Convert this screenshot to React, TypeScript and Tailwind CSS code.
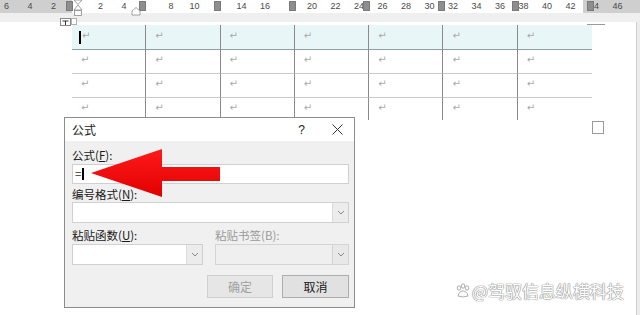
import React from "react";

const rulerVals = [-6, -4, -2, 2, 4, 8, 10, 14, 16, 20, 22, 24, 26, 28, 30, 32, 34, 36, 38, 40, 42, 44, 46];
const markers = [66, 139, 214, 289, 363, 438, 512, 587];

function Ruler() {
  return (
    <div className="relative h-[13px] flex">
      <div className="w-[72px] bg-[#cfcfcf]" />
      <div className="w-[511px] bg-white" />
      <div className="flex-1 bg-[#cfcfcf]" />
      {rulerVals.map((v) => (
        <span
          key={v}
          className="absolute top-[1px] text-[9px] leading-[11px] text-[#4a4a4a] -translate-x-1/2"
          style={{ left: 77 + v * 11.75, fontFamily: '"Liberation Sans", Arial, sans-serif' }}
        >
          {Math.abs(v)}
        </span>
      ))}
      {markers.map((m) => (
        <div
          key={m}
          className="absolute top-[1px] w-[7px] h-[10px] bg-[#8e8e8e] border border-[#7a7a7a]"
          style={{ left: m }}
        />
      ))}
      <svg className="absolute left-[73px] top-0 overflow-visible" width="10" height="18" viewBox="0 0 10 18">
        <path d="M1 0 L9 0 L5 4.5 Z" fill="#fff" stroke="#8a8a8a" strokeWidth="0.8" />
        <path d="M5 5 L9 10 L1 10 Z" fill="#fff" stroke="#8a8a8a" strokeWidth="0.8" />
        <rect x="1.5" y="10.5" width="7" height="5" fill="#fff" stroke="#8a8a8a" strokeWidth="0.8" />
      </svg>
      <svg className="absolute left-[131px] top-[7px] overflow-visible" width="10" height="9" viewBox="0 0 10 9">
        <path d="M1 8 L1 4 L5 0.5 L9 4 L9 8 Z" fill="#fff" stroke="#8a8a8a" strokeWidth="0.8" />
      </svg>
    </div>
  );
}

function Cell({ header, first, last, bottom }: { header?: boolean; first?: boolean; last?: boolean; bottom?: boolean }) {
  return (
    <div
      className={
        "relative flex items-center pl-[9px] " +
        (header
          ? "h-[25px] bg-[#e9f6f8] border-b border-b-[#8f9fa1] "
          : bottom
          ? "h-[22px] "
          : "h-[24px] border-b border-b-[#c9c9c9] ") +
        (last ? "" : "border-r border-r-[#8a8a8a]")
      }
    >
      {first && <span className="w-[2px] h-[13px] bg-black mr-[1px] -ml-[2px]" />}
      <span
        className="text-[10px] leading-none text-[#a8a8a8] -mt-[3px]"
        style={{ fontFamily: '"DejaVu Sans", sans-serif' }}
      >
        ↵
      </span>
    </div>
  );
}

function Chevron({ light }: { light?: boolean }) {
  return (
    <div
      className={
        "w-[16px] h-full flex items-center justify-center border-l " +
        (light ? "bg-[#e8e8e8] border-[#d4d4d4]" : "bg-[#ececec] border-[#dcdcdc]")
      }
    >
      <svg width="8" height="5" viewBox="0 0 8 5">
        <path d="M1 1 L4 4 L7 1" fill="none" stroke="#8a8a8a" strokeWidth="1" />
      </svg>
    </div>
  );
}

export default function App() {
  const cjk = '"Noto Sans CJK SC", "Noto Sans", sans-serif';
  return (
    <div className="relative w-[640px] h-[315px] overflow-hidden bg-[#ececec]" style={{ fontFamily: cjk }}>
      <Ruler />
      <div className="h-[9px] bg-[#efefef]" />
      <div className="relative h-[293px] w-[637px] bg-white border-r border-[#cfcfcf]">
        {/* table move handle */}
        <div className="absolute left-[60px] -top-[4px] w-[11px] h-[8px] bg-white border border-[#8a8a8a] flex items-center justify-center">
          <svg width="7" height="5" viewBox="0 0 7 5">
            <path d="M0.5 1 H6.5 M3.5 1 V5" stroke="#333" strokeWidth="1" />
          </svg>
        </div>
        <div className="absolute left-[71px] -top-[4px] w-[6px] h-[7px] border border-[#b0b0b0] bg-white" />
        {/* top-right corner mark */}
        <div className="absolute left-[587px] top-[2px] w-[18px] h-[3px] border-t border-l border-[#9a9a9a]" />
        {/* end mark square */}
        <div className="absolute left-[592px] top-[99px] w-[12px] h-[13px] border border-[#9a9a9a]" />

        <div className="ml-[72px] pt-[3px] w-[520px] grid grid-cols-7">
          {Array.from({ length: 28 }).map((_, i) => (
            <Cell key={i} header={i < 7} first={i === 0} last={i % 7 === 6} bottom={i >= 21} />
          ))}
        </div>

        {/* watermark */}
        <div
          className="absolute left-[455px] top-[259px] flex items-center gap-[1px] whitespace-nowrap text-[17px] leading-[20px] text-white"
          style={{ textShadow: "0 0 1px #888, 0 0 1px #888, 0 0 1px #888" }}
        >
          <svg width="16" height="16" viewBox="0 0 16 16" className="shrink-0">
            <g fill="#fff" stroke="#999" strokeWidth="0.8">
              <ellipse cx="4" cy="5" rx="1.8" ry="2.2" />
              <ellipse cx="8" cy="3" rx="1.8" ry="2.2" />
              <ellipse cx="12" cy="5" rx="1.8" ry="2.2" />
              <path d="M3 13 Q4 8 8 8 Q12 8 13 13 Q8 15 3 13 Z" />
            </g>
          </svg>
          <span className="whitespace-nowrap">@驾驭信息纵横科技</span>
        </div>
      </div>

      {/* dialog */}
      <div className="absolute left-[64px] top-[117px] w-[291px] h-[191px] border border-[#8c8c8c] bg-[#f0f0f0] flex flex-col">
        <div className="h-[23px] bg-white flex items-center pl-[7px] pr-[11px] text-[12px] text-[#1a1a1a]">
          <span>公式</span>
          <span className="ml-auto mr-[27px] text-[12px]" style={{ fontFamily: '"Liberation Sans", sans-serif' }}>?</span>
          <svg width="11" height="11" viewBox="0 0 11 11">
            <path d="M0.5 0.5 L10.5 10.5 M10.5 0.5 L0.5 10.5" stroke="#333" strokeWidth="1" />
          </svg>
        </div>
        <div className="flex-1 pl-[7px] pr-[5px] text-[11.5px] text-[#1a1a1a]">
          <div className="h-[23px] flex items-end pb-[2px] leading-[14px]">
            公式(<span className="underline">F</span>):
          </div>
          <div className="h-[20px] bg-white border border-[#d0d0d0] flex items-center pl-[2px]">
            <span className="leading-none text-[#333]">=</span>
            <span className="w-[1.5px] h-[12px] bg-black ml-[1px]" />
          </div>
          <div className="h-[18px] flex items-end pb-[1px] leading-[14px]">
            编号格式(<span className="underline">N</span>):
          </div>
          <div className="h-[21px] bg-white border border-[#d0d0d0] flex justify-end">
            <Chevron />
          </div>
          <div className="h-[20px] flex items-end leading-[14px] pb-[1px]">
            <div className="w-[143px]">
              粘贴函数(<span className="underline">U</span>):
            </div>
            <div className="text-[#9a9a9a]">粘贴书签(B):</div>
          </div>
          <div className="flex mt-[1px]">
            <div className="w-[131px] h-[21px] bg-white border border-[#d0d0d0] flex justify-end">
              <Chevron />
            </div>
            <div className="ml-[12px] w-[134px] h-[21px] bg-[#efefef] border border-[#d4d4d4] flex justify-end">
              <Chevron light />
            </div>
          </div>
          <div className="flex justify-end gap-[9px] mt-[10px]">
            <div className="w-[66px] h-[23px] bg-[#e6e6e6] border border-[#cfcfcf] flex items-center justify-center text-[#a0a0a0] text-[12px]">
              确定
            </div>
            <div className="w-[67px] h-[23px] bg-[#e1e1e1] border border-[#adadad] flex items-center justify-center text-[#1a1a1a] text-[12px]">
              取消
            </div>
          </div>
        </div>
      </div>

      {/* red arrow */}
      <svg className="absolute left-0 top-0 pointer-events-none" width="640" height="315">
        <defs>
          <linearGradient id="rg" x1="0" y1="0" x2="0" y2="1">
            <stop offset="0" stopColor="#ff1a1a" />
            <stop offset="1" stopColor="#e00000" />
          </linearGradient>
        </defs>
        <path d="M91 173 L162 149 L162 167 L220 167 L220 181 L162 181 L162 197 Z" fill="url(#rg)" />
      </svg>
    </div>
  );
}
